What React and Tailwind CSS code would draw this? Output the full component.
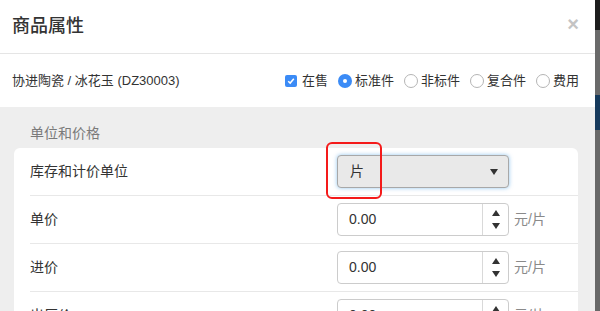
import React from 'react';

const font = { fontFamily: '"Liberation Sans", "Noto Sans CJK SC", sans-serif' };

function Radio({ checked, label }) {
    return (
        <label className="flex items-center gap-[3px]">
            {checked ? (
                <span className="w-[14px] h-[14px] rounded-full bg-[#3b8bf6] flex items-center justify-center">
                    <span className="w-[4px] h-[4px] rounded-full bg-white" />
                </span>
            ) : (
                <span className="w-[14px] h-[14px] rounded-full bg-white border border-[#b5b5b5]" />
            )}
            <span>{label}</span>
        </label>
    );
}

function Spinner() {
    return (
        <div className="w-[26px] h-full border-l border-[#d9d9d9] flex flex-col items-center justify-center gap-[7px]">
            <svg width="8" height="6" viewBox="0 0 8 6"><path d="M4 0 L8 6 L0 6 Z" fill="#333" /></svg>
            <svg width="8" height="6" viewBox="0 0 8 6"><path d="M0 0 L8 0 L4 6 Z" fill="#333" /></svg>
        </div>
    );
}

function PriceInput() {
    return (
        <div className="flex items-center">
            <div className="w-[172px] h-[33px] border border-[#cccccc] rounded-[4px] bg-white flex items-center">
                <span className="flex-1 pl-[11px] text-[14px] text-[#333]">0.00</span>
                <Spinner />
            </div>
            <span className="ml-[5px] text-[14px] text-[#8a8a8a]">元/片</span>
        </div>
    );
}

function Row({ label, children }) {
    return (
        <div className="pl-[16px]">
            <div className="h-[48px] border-b border-[#e8e8e8] flex items-center">
                <span className="w-[307px] text-[14px] text-[#333]">{label}</span>
                {children}
            </div>
        </div>
    );
}

export default function App() {
    return (
        <div className="w-[600px] h-[311px] flex overflow-hidden" style={font}>
            <div className="w-[595px] h-full bg-white flex flex-col">
                {/* header */}
                <div className="h-[54px] shrink-0 border-b border-[#e5e5e5] pl-[12px] pr-[16px] flex items-center justify-between">
                    <span className="text-[18px] text-[#333] font-medium">商品属性</span>
                    <span className="text-[20px] font-bold text-[#c4c4c4] leading-none -mt-[6px]">×</span>
                </div>

                {/* product line */}
                <div className="h-[53px] shrink-0 pl-[12px] pr-[16px] flex items-center justify-between text-[13px] text-[#333]">
                    <span>协进陶瓷 / 冰花玉 (DZ30003)</span>
                    <div className="flex items-center gap-[10px]">
                        <label className="flex items-center gap-[5px]">
                            <span className="w-[12px] h-[12px] rounded-[2px] bg-[#3b8bf6] flex items-center justify-center">
                                <svg width="8" height="8" viewBox="0 0 8 8"><path d="M1.2 4.2 L3.2 6.1 L6.8 1.8" stroke="white" strokeWidth="1.5" fill="none" /></svg>
                            </span>
                            <span>在售</span>
                        </label>
                        <Radio checked label="标准件" />
                        <Radio label="非标件" />
                        <Radio label="复合件" />
                        <Radio label="费用" />
                    </div>
                </div>

                {/* body */}
                <div className="flex-1 bg-[#eeeeee] pl-[14px] pr-[17px]">
                    <div className="h-[41px] pl-[16px] pt-[16px] text-[14px] leading-[20px] text-[#7a7a7a]">单位和价格</div>
                    <div className="bg-white rounded-t-[6px]">
                        <Row label="库存和计价单位">
                            <div className="relative">
                                <div className="w-[172px] h-[33px] border border-[#a8a8a8] rounded-[4px] bg-[#e9e9e9] shadow-[0_0_4px_rgba(102,175,233,0.7)] flex items-center justify-between pl-[12px] pr-[10px]">
                                    <span className="text-[14px] text-[#333]">片</span>
                                    <svg width="8" height="6" viewBox="0 0 8 6"><path d="M0 0 L8 0 L4 6 Z" fill="#333" /></svg>
                                </div>
                                <div className="absolute left-[-11px] top-[-13px] w-[56px] h-[57px] border-[2.5px] border-[#f41a1a] rounded-[6px]" />
                            </div>
                        </Row>
                        <Row label="单价"><PriceInput /></Row>
                        <Row label="进价"><PriceInput /></Row>
                        <Row label="出厂价"><PriceInput /></Row>
                    </div>
                </div>
            </div>

            {/* page behind the modal */}
            <div className="w-[5px] h-full flex flex-col">
                <div className="h-[30px] bg-[#1e1e1e]" />
                <div className="h-[65px] bg-[#6a6a6a]" />
                <div className="h-[35px] bg-[#163a5c]" />
                <div className="flex-1 bg-[#686868]" />
            </div>
        </div>
    );
}
